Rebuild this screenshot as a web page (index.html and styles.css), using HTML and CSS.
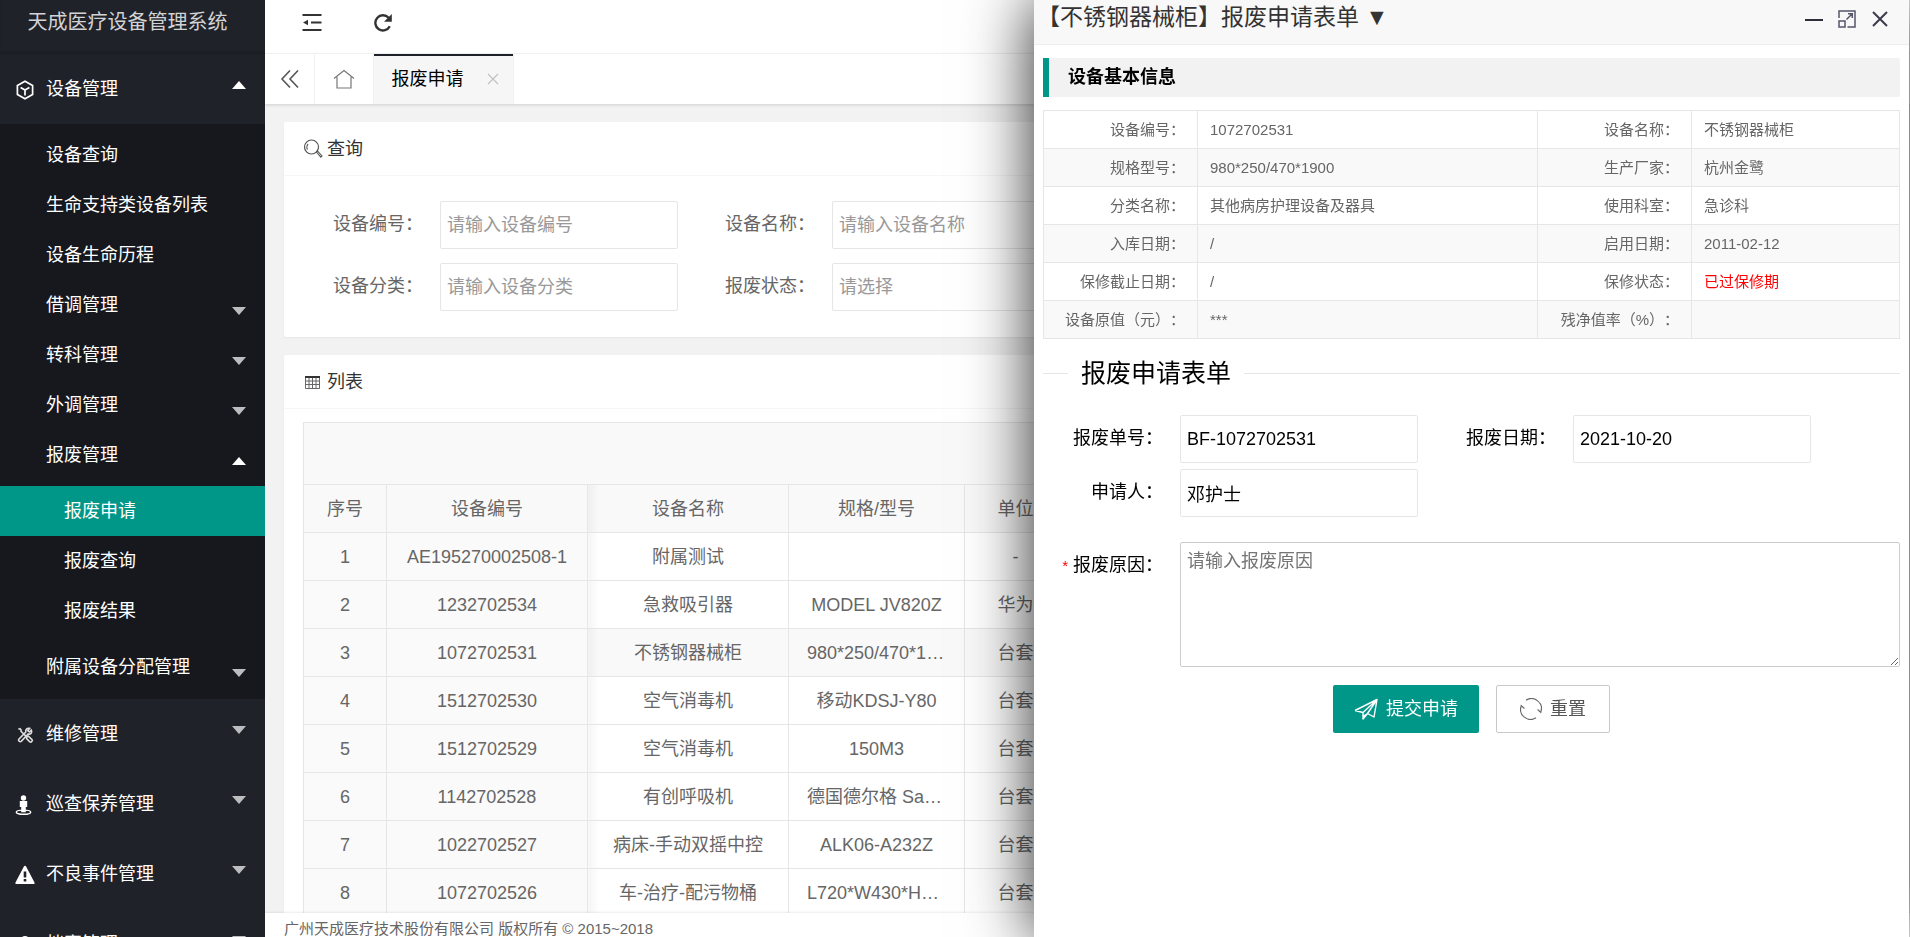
FILE: index.html
```
<!DOCTYPE html>
<html lang="zh-CN">
<head>
	<meta charset="UTF-8">
	<title>天成医疗设备管理系统</title>
	<link rel="stylesheet" href="styles.css">
</head>
<body>
	<!-- 左侧菜单 -->
	<div class="side">
		<div class="logo">天成医疗设备管理系统</div>
		<ul class="nav">
			<li class="open">
				<a href="#">
					<svg class="ico" viewBox="0 0 20 20"><path d="M10 1.2 17.6 5.5v9L10 18.8 2.4 14.5v-9z M5.6 7.4 10 10l4.4-2.6 M10 10v5.4" fill="none" stroke="#fff" stroke-width="1.7"/></svg>
					设备管理<i class="arrow up"></i>
				</a>
				<ul class="sub">
					<li><a href="#">设备查询</a></li>
					<li><a href="#">生命支持类设备列表</a></li>
					<li><a href="#">设备生命历程</a></li>
					<li><a href="#">借调管理<i class="arrow"></i></a></li>
					<li><a href="#">转科管理<i class="arrow"></i></a></li>
					<li><a href="#">外调管理<i class="arrow"></i></a></li>
					<li>
						<a href="#">报废管理<i class="arrow up"></i></a>
						<ul class="third">
							<li class="this"><a href="#">报废申请</a></li>
							<li><a href="#">报废查询</a></li>
							<li><a href="#">报废结果</a></li>
						</ul>
					</li>
					<li><a href="#">附属设备分配管理<i class="arrow"></i></a></li>
				</ul>
			</li>
			<li>
				<a href="#">
					<svg class="ico" viewBox="0 0 20 20"><g fill="none" stroke="#ddd" stroke-width="1.6"><path d="M3.4 4.2 5 3.6l1.2 1.6-.2 1 5.4 5.4"/><path d="M11.4 12.4l1.8-1.4 3.8 3.6c1 1.2-.8 3.2-2.2 2.2l-3.2-3.2z"/><path d="M16.4 5.2l-2 1.8-1.6-1.4 1.8-2.2c-2.6-.6-4.4 1.2-3.8 3.6l-7 7.2c-1 1.2 1 3.2 2.4 2.2l7-7.4c2.2.6 4.4-1 3.2-3.8z"/></g></svg>
					维修管理<i class="arrow"></i>
				</a>
			</li>
			<li>
				<a href="#">
					<svg class="ico" viewBox="0 0 20 20"><circle cx="8.5" cy="3" r="2.7" fill="#fff"/><path d="M4.8 6h7.4v6h-1.4v5.2H6.2V12H4.8z" fill="#fff"/><ellipse cx="8.5" cy="17.2" rx="7.2" ry="2.1" fill="none" stroke="#fff" stroke-width="1.4"/></svg>
					巡查保养管理<i class="arrow"></i>
				</a>
			</li>
			<li>
				<a href="#">
					<svg class="ico" viewBox="0 0 20 20"><path d="M10 .8c.5 0 .9.3 1.1.7l8.4 16c.4.8 0 1.6-.9 1.6H1.4c-.9 0-1.3-.8-.9-1.6l8.4-16c.2-.4.6-.7 1.1-.7z" fill="#fff"/><path d="M8.7 6.6h2.6v6H8.7zM8.7 14h2.6v2.6H8.7z" fill="#20222a"/></svg>
					不良事件管理<i class="arrow"></i>
				</a>
			</li>
			<li>
				<a href="#">
					<svg class="ico" viewBox="0 0 20 20"><circle cx="10" cy="6" r="5" fill="#fff"/><path d="M2 19c0-9 16-9 16 0z" fill="#fff"/></svg>
					档案管理<i class="arrow"></i>
				</a>
			</li>
		</ul>
	</div>

	<!-- 右侧内容 -->
	<div class="main">
		<div class="header">
			<a href="#" title="侧边伸缩"><svg width="20" height="20" viewBox="0 0 20 20"><path d="M.5 3h19M9 10.500h10.500M.5 18h19" stroke="#333" stroke-width="2.200" fill="none"/><path d="M1 10.500 6 7.700v5.600z" fill="#333"/></svg></a>
			<a href="#" title="刷新"><svg width="20" height="20" viewBox="0 0 20 20"><path d="M16.800 14.200A7.600 7.600 0 1 1 15.600 5.800" stroke="#333" stroke-width="2.400" fill="none"/><path d="M18.800 2v7.800H11z" fill="#333"/></svg></a>
		</div>
		<div class="tabs">
			<a href="#" class="tab-ctrl"><svg width="20" height="20" viewBox="0 0 20 20"><path d="M10 1.500 2 10l8 8.500M18 1.500 10 10l8 8.500" stroke="#555" stroke-width="1.600" fill="none"/></svg></a>
			<a href="#" class="tab-home"><svg width="22" height="20" viewBox="0 0 22 20"><path d="M1 9.500 11 1.500l10 8M4 8v11h14V8" stroke="#777" stroke-width="1.200" fill="none"/></svg></a>
			<a href="#" class="tab-this">报废申请<svg width="12" height="12" viewBox="0 0 12 12"><path d="M1 1l10 10M11 1 1 11" stroke="#c2c2c2" stroke-width="1.200"/></svg></a>
		</div>
		<div class="content">
			<div class="card">
				<div class="card-head">
					<svg width="20" height="20" viewBox="0 0 20 20"><circle cx="8.500" cy="8" r="7" fill="none" stroke="#555" stroke-width="1.200"/><path d="M4.500 10.500a5 5 0 0 1 .5-5.500M13.500 13l1-1 4.500 5-1.200 1.200z" fill="none" stroke="#555" stroke-width="1.100"/></svg>查询
				</div>
				<form class="search">
					<div class="item"><label for="q-code">设备编号：</label><input type="text" id="q-code" placeholder="请输入设备编号"></div>
					<div class="item"><label for="q-name">设备名称：</label><input type="text" id="q-name" placeholder="请输入设备名称"></div>
					<div class="item"><label for="q-type">设备分类：</label><input type="text" id="q-type" placeholder="请输入设备分类"></div>
					<div class="item"><label for="q-state">报废状态：</label><input type="text" id="q-state" placeholder="请选择"></div>
				</form>
			</div>
			<div class="card">
				<div class="card-head">
					<svg width="20" height="20" viewBox="0 0 20 20"><path d="M2.500 5.500h14v11h-14zM2.500 9h14M2.500 12.500h14M6 5v11M9.500 5v11M13 5v11" fill="none" stroke="#666"/><path d="M2 5h15" stroke="#333" stroke-width="2"/></svg>列表
				</div>
				<div class="list">
					<table>
						<colgroup><col class="c-no"><col class="c-code"><col class="c-name"><col class="c-spec"><col class="c-unit"><col></colgroup>
						<thead>
							<tr class="bar"><th colspan="6"></th></tr>
							<tr><th>序号</th><th>设备编号</th><th class="edge">设备名称</th><th>规格/型号</th><th>单位</th><th></th></tr>
						</thead>
						<tbody>
							<tr><td>1</td><td>AE195270002508-1</td><td class="edge">附属测试</td><td></td><td>-</td><td></td></tr>
							<tr><td>2</td><td>1232702534</td><td class="edge">急救吸引器</td><td>MODEL JV820Z</td><td>华为</td><td></td></tr>
							<tr class="hover"><td>3</td><td>1072702531</td><td class="edge">不锈钢器械柜</td><td>980*250/470*1900</td><td>台套</td><td></td></tr>
							<tr><td>4</td><td>1512702530</td><td class="edge">空气消毒机</td><td>移动KDSJ-Y80</td><td>台套</td><td></td></tr>
							<tr><td>5</td><td>1512702529</td><td class="edge">空气消毒机</td><td>150M3</td><td>台套</td><td></td></tr>
							<tr><td>6</td><td>1142702528</td><td class="edge">有创呼吸机</td><td>德国德尔格 Savina</td><td>台套</td><td></td></tr>
							<tr><td>7</td><td>1022702527</td><td class="edge">病床-手动双摇中控</td><td>ALK06-A232Z</td><td>台套</td><td></td></tr>
							<tr><td>8</td><td>1072702526</td><td class="edge">车-治疗-配污物桶</td><td>L720*W430*H850</td><td>台套</td><td></td></tr>
						</tbody>
					</table>
				</div>
			</div>
		</div>
		<div class="footer">广州天成医疗技术股份有限公司 版权所有 © 2015~2018</div>
	</div>

	<!-- 报废申请弹层 -->
	<div class="layer">
		<div class="layer-title">
			<span>【不锈钢器械柜】报废申请表单 ▼</span>
			<div class="layer-btns">
				<button type="button" title="最小化"><svg width="18" height="18" viewBox="0 0 18 18"><path d="M0 10h18" stroke="#2e2d3c" stroke-width="2"/></svg></button>
				<button type="button" title="最大化"><svg width="18" height="18" viewBox="0 0 18 18"><path d="M1 8V1h16v16H9.500M1 11h6v6H1zM8.500 9.500 14 4M10 3.800h4.300V8" fill="none" stroke="#55546a" stroke-width="1.500"/></svg></button>
				<button type="button" title="关闭"><svg width="18" height="18" viewBox="0 0 18 18"><path d="M2 2l14 14M16 2 2 16" stroke="#3c3b4c" stroke-width="2"/></svg></button>
			</div>
		</div>
		<div class="layer-body">
			<div class="quote">设备基本信息</div>
			<table class="info">
				<colgroup><col class="k"><col><col class="k"><col class="v2"></colgroup>
				<tr><th>设备编号：</th><td>1072702531</td><th>设备名称：</th><td>不锈钢器械柜</td></tr>
				<tr><th>规格型号：</th><td>980*250/470*1900</td><th>生产厂家：</th><td>杭州金鹭</td></tr>
				<tr><th>分类名称：</th><td>其他病房护理设备及器具</td><th>使用科室：</th><td>急诊科</td></tr>
				<tr><th>入库日期：</th><td>/</td><th>启用日期：</th><td>2011-02-12</td></tr>
				<tr><th>保修截止日期：</th><td>/</td><th>保修状态：</th><td class="red">已过保修期</td></tr>
				<tr><th>设备原值（元）：</th><td>***</td><th>残净值率（%）：</th><td></td></tr>
			</table>
			<form class="apply">
				<fieldset>
					<legend>报废申请表单</legend>
				</fieldset>
				<div class="row">
					<div class="item"><label for="bf-no">报废单号：</label><input type="text" id="bf-no" value="BF-1072702531"></div>
					<div class="item"><label for="bf-date">报废日期：</label><input type="text" id="bf-date" value="2021-10-20"></div>
					<div class="item"><label for="bf-user">申请人：</label><input type="text" id="bf-user" value="邓护士"></div>
				</div>
				<div class="item reason">
					<label for="bf-reason"><span class="must">*</span>报废原因：</label>
					<textarea id="bf-reason" placeholder="请输入报废原因"></textarea>
				</div>
				<div class="btns">
					<button type="submit" class="btn"><svg width="24" height="22" viewBox="0 0 24 22"><path d="M1 12.500 23 1.500 20 19l-6.500-3.500L9 18.500M1 12.500l8 2V21l4.500-5.500M9 14.500 23 1.500l-9.500 14" fill="none" stroke="#fff" stroke-width="1.400" stroke-linejoin="round"/></svg>提交申请</button>
					<button type="reset" class="btn btn-plain"><svg width="22" height="22" viewBox="0 0 22 22"><path d="M6 2.200A10 10 0 0 1 20.800 14M16 19.800A10 10 0 0 1 1.200 8M17.600 11.500l3.200 3 .6-4M.6 11.500l.6-4 3.200 3" fill="none" stroke="#666" stroke-width="1.100"/></svg>重置</button>
				</div>
			</form>
		</div>
	</div>
</body>
</html>
```
FILE: styles.css
```
*{
	margin: 0;
	padding: 0;
	box-sizing: border-box;
}
body{
	display: flex;
	height: 100vh;
	overflow: hidden;
	background: #f2f2f2;
	color: #666;
	font: 18px/24px "Liberation Sans", "Noto Sans CJK SC", sans-serif;
}
ul{
	list-style: none;
}
a{
	color: inherit;
	text-decoration: none;
}
input, textarea, button{
	font: inherit;
}
svg{
	flex: none;
}

/* 左侧菜单 */
.side{
	flex: none;
	width: 265px;
	height: 100vh;
	overflow: hidden;
	background: #20222a;
	color: #fff;
}
.logo{
	height: 54px;
	padding-right: 10px;
	line-height: 44px;
	font-size: 20px;
	text-align: center;
	color: #d2d3d4;
	box-shadow: inset 0 -2px 2px rgba(0,0,0,.15);
}
.nav a{
	position: relative;
	display: block;
	padding-left: 46px;
	line-height: 70px;
}
.nav .ico{
	position: absolute;
	left: 15px;
	top: 26px;
	width: 20px;
	height: 20px;
}
.arrow{
	position: absolute;
	right: 19px;
	top: 27px;
	border: 7px solid transparent;
	border-top: 8px solid #bcbdbf;
	border-bottom: 0;
}
.arrow.up{
	border-top: 0;
	border-bottom: 8px solid #fff;
}
.nav .sub{
	padding: 6px 0 7px;
	background: #17181e;
}
.nav .sub a{
	line-height: 50px;
}
.third{
	padding: 6px 0;
}
.nav .third a{
	padding-left: 64px;
}
.third .this{
	background: #009688;
}

/* 顶部 */
.main{
	flex: 1;
	display: flex;
	flex-direction: column;
	min-width: 0;
}
.header{
	flex: none;
	display: flex;
	gap: 51px;
	height: 54px;
	padding: 12px 37px 0;
	background: #fff;
	border-bottom: 1px solid #f6f6f6;
}
.tabs{
	flex: none;
	display: flex;
	height: 50px;
	background: #fff;
	box-shadow: 0 1px 3px rgba(0,0,0,.15);
}
.tabs a{
	display: flex;
	align-items: center;
	justify-content: center;
	border-right: 1px solid #f2f2f2;
}
.tab-ctrl{
	width: 50px;
}
.tab-home{
	width: 59px;
}
.tabs .tab-this{
	gap: 23px;
	width: 140px;
	padding-left: 3px;
	background: #f6f6f6;
	box-shadow: inset 0 2px #20222a;
	color: #000;
}

/* 内容 */
.content{
	flex: 1;
	min-height: 0;
	padding: 18px 19px 0;
	overflow: hidden;
}
.card{
	margin-bottom: 18px;
	background: #fff;
	border-radius: 2px;
	box-shadow: 0 1px 2px rgba(0,0,0,.05);
}
.card-head{
	display: flex;
	align-items: center;
	gap: 4px;
	height: 54px;
	padding: 0 19px;
	border-bottom: 1px solid #f6f6f6;
	color: #333;
}
.search{
	display: flex;
	flex-wrap: wrap;
	gap: 14px 0;
	max-width: 840px;
	padding: 25px 19px 26px;
}
.item{
	display: flex;
	width: 392px;
}
.item label{
	width: 137px;
	padding-right: 17px;
	line-height: 46px;
	text-align: right;
	white-space: nowrap;
}
.item input{
	width: 238px;
	height: 48px;
	padding-left: 6px;
	border: 1px solid #e6e6e6;
	border-radius: 2px;
	outline: none;
	background: #fff;
}
.item input::placeholder{
	color: #999;
}
.list{
	padding: 13px 19px;
}
table{
	width: 100%;
	table-layout: fixed;
	border-collapse: collapse;
}
.list th, .list td{
	height: 48px;
	padding: 0 18px;
	border: 1px solid #e6e6e6;
	background: #fff;
	font-weight: normal;
	text-align: center;
	white-space: nowrap;
	overflow: hidden;
	text-overflow: ellipsis;
}
.list th, .list .hover td{
	background: #f9f9f9;
}
.list td:nth-child(-n+2){
	background: #fafafa;
}
.list .bar th{
	height: 62px;
}
.list tr .edge{
	background-image: linear-gradient(to right, rgba(0,0,0,.04), transparent 10px);
}
.c-no{
	width: 83px;
}
.c-code, .c-name{
	width: 201px;
}
.c-spec{
	width: 176px;
}
.c-unit{
	width: 102px;
}
.footer{
	position: relative;
	flex: none;
	height: 24px;
	padding-left: 19px;
	line-height: 32px;
	font-size: 15px;
	background: #fff;
	box-shadow: 0 -1px 2px rgba(0,0,0,.08);
}

/* 弹层 */
.layer{
	position: fixed;
	top: 0;
	right: 1px;
	bottom: 0;
	width: 875px;
	background: #fff;
	box-shadow: 0 0 62px rgba(0,0,0,.85);
	color: #000;
}
.layer-title{
	display: flex;
	justify-content: space-between;
	height: 45px;
	padding: 0 20px 0 3px;
	border-bottom: 1px solid #eee;
	background: #f8f8f8;
	color: #333;
	font-size: 23px;
	line-height: 34px;
}
.layer-btns{
	display: flex;
	gap: 15px;
	padding-top: 10px;
}
.layer-btns button{
	width: 18px;
	height: 18px;
	border: 0;
	background: none;
	line-height: 0;
}
.layer-body{
	padding: 13px 9px;
}
.quote{
	height: 39px;
	margin-bottom: 13px;
	padding-left: 19px;
	border-left: 6px solid #009688;
	border-radius: 0 2px 2px 0;
	background: #f2f2f2;
	line-height: 38px;
	font-weight: bold;
}
.info{
	color: #666;
	font-size: 15px;
}
.info th, .info td{
	height: 38px;
	padding: 0 12px;
	border: 1px solid #e6e6e6;
	font-weight: normal;
	text-align: left;
}
.info th{
	text-align: right;
	text-spacing-trim: space-all;
}
.info tr:nth-child(even){
	background: #f9f9f9;
}
.info .red{
	color: #f00;
}
.k{
	width: 154px;
}
.v2{
	width: 208px;
}
.apply fieldset{
	margin-top: 18px;
	border: 0;
	border-top: 1px solid #e6e6e6;
}
.apply legend{
	margin-left: 25px;
	padding: 0 13px;
	font-size: 25px;
	line-height: 32px;
}
.row{
	display: flex;
	flex-wrap: wrap;
	gap: 6px 1px;
	margin-top: 26px;
}
.reason{
	width: auto;
	margin-top: 25px;
}
.reason textarea{
	flex: 1;
	height: 125px;
	padding: 6px;
	border: 1px solid #ccc;
	border-radius: 2px;
	resize: vertical;
	outline: none;
}
.must{
	margin-right: 5px;
	color: #f00;
	font-size: 15px;
}
.btns{
	display: flex;
	justify-content: center;
	gap: 17px;
	margin-top: 18px;
}
.btn{
	display: flex;
	align-items: center;
	justify-content: center;
	gap: 8px;
	width: 146px;
	height: 48px;
	border: 0;
	border-radius: 2px;
	background: #009688;
	color: #fff;
}
.btn-plain{
	width: 114px;
	border: 1px solid #c9c9c9;
	background: #fff;
	color: #555;
}
```
